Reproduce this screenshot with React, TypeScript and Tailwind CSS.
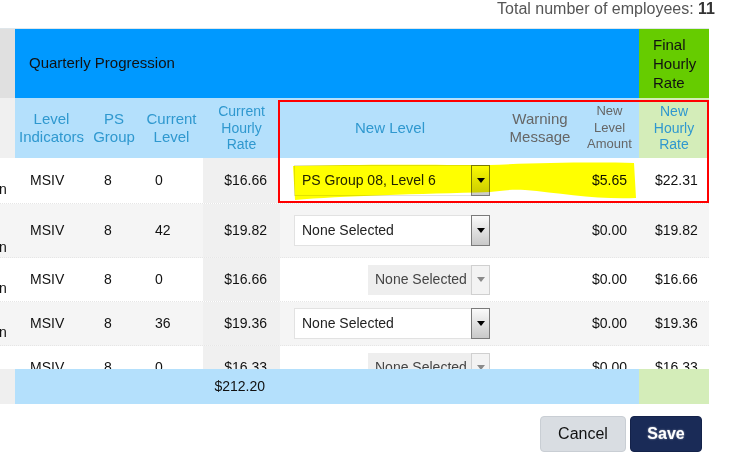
import React from "react";

const cols = "grid grid-cols-[15px_73px_52px_63px_77px_220px_80px_59px_70px]";

interface Row {
  lines: number;
  height: string;
  bg: string;
  level: string;
  rate: string;
  select: "chosen" | "open" | "disabled";
  amount: string;
  final: string;
}

const rows: Row[] = [
  { lines: 2, height: "h-[46px]", bg: "bg-white", level: "0", rate: "$16.66", select: "chosen", amount: "$5.65", final: "$22.31" },
  { lines: 3, height: "h-[54px]", bg: "bg-[#f5f5f5]", level: "42", rate: "$19.82", select: "open", amount: "$0.00", final: "$19.82" },
  { lines: 2, height: "h-[44px]", bg: "bg-white", level: "0", rate: "$16.66", select: "disabled", amount: "$0.00", final: "$16.66" },
  { lines: 2, height: "h-[44px]", bg: "bg-[#f5f5f5]", level: "36", rate: "$19.36", select: "open", amount: "$0.00", final: "$19.36" },
  { lines: 2, height: "h-[44px]", bg: "bg-white", level: "0", rate: "$16.33", select: "disabled", amount: "$0.00", final: "$16.33" },
];

function Arrow({ dim }: { dim?: boolean }) {
  return (
    <svg width="8" height="5" viewBox="0 0 8 5">
      <path d="M0 0 L8 0 L4 5 Z" fill={dim ? "#8a8a8a" : "#000"} />
    </svg>
  );
}

function LevelSelect({ kind }: { kind: Row["select"] }) {
  if (kind === "disabled") {
    return (
      <div className="ml-auto mr-[10px] flex h-[30px] w-[122px] items-stretch bg-[#eeeeee]">
        <span className="flex flex-1 items-center pl-[7px] text-[14px] text-[#444]">None Selected</span>
        <span className="flex w-[19px] items-center justify-center border border-[#d0d0d0] bg-[#f3f3f3]">
          <Arrow dim />
        </span>
      </div>
    );
  }
  return (
    <div className="ml-[14px] flex h-[31px] w-[196px] items-stretch border border-[#e2e2e2] bg-white">
      <span className="flex flex-1 items-center pl-[7px] text-[14px] text-[#222]">
        {kind === "chosen" ? "PS Group 08, Level 6" : "None Selected"}
      </span>
      <span className="-my-px -mr-px flex w-[19px] items-center justify-center border border-[#7a7a7a] bg-gradient-to-b from-[#fafafa] to-[#c9c9c9]">
        <Arrow />
      </span>
    </div>
  );
}

function NameTail({ lines }: { lines: number }) {
  return (
    <div className="overflow-hidden">
      <div className="-ml-[1px] leading-[17px]">
        {Array.from({ length: lines - 1 }).map((_, i) => (
          <div key={i}>&nbsp;</div>
        ))}
        <div>n</div>
      </div>
    </div>
  );
}

export default function App() {
  return (
    <div className="relative h-[456px] w-[745px] overflow-hidden bg-white font-['Liberation_Sans',Arial,sans-serif] text-[14px] text-[#111]">
      <div className="flex h-[28px] justify-end pr-[30px] pt-px text-[16px] leading-[16px] text-[#555]">
        <span>
          Total number of employees: <b className="text-[#333]">11</b>
        </span>
      </div>

      <div className="w-[709px] border-t border-[#dfe6ea]">
        <div className="flex h-[69px]">
          <div className="w-[15px] bg-[#e0e0e0]" />
          <div className="flex flex-1 items-center bg-[#0099ff] pl-[14px] text-[15px]">Quarterly Progression</div>
          <div className="flex w-[70px] items-center bg-[#66cc00] pl-[14px] text-[15px] leading-[19px]">
            Final
            <br />
            Hourly
            <br />
            Rate
          </div>
        </div>

        <div className={`${cols} h-[60px] items-center text-center text-[15px] leading-[18px] text-[#2f98cf]`}>
          <div className="h-full bg-[#f0f0f0]" />
          <div className="flex h-full items-center justify-center bg-[#b4e0fc]">Level Indicators</div>
          <div className="flex h-full items-center justify-center bg-[#b4e0fc]">PS Group</div>
          <div className="flex h-full items-center justify-center bg-[#b4e0fc]">Current Level</div>
          <div className="flex h-full items-center justify-center bg-[#b4e0fc] text-[14px] leading-[16.5px]">
            Current
            <br />
            Hourly
            <br />
            Rate
          </div>
          <div className="flex h-full items-center justify-center bg-[#b4e0fc]">New Level</div>
          <div className="flex h-full items-center justify-center bg-[#b4e0fc] text-[#666]">Warning Message</div>
          <div className="flex h-full items-center justify-center bg-[#b4e0fc] text-[13px] leading-[16.5px] text-[#666]">
            New
            <br />
            Level
            <br />
            Amount
          </div>
          <div className="flex h-full items-center justify-center bg-[#d4edb9] text-[14px] leading-[16.5px]">
            New
            <br />
            Hourly
            <br />
            Rate
          </div>
        </div>

        <div className="relative h-[211px] overflow-hidden">
          {rows.map((r, i) => (
            <div key={i} className={`${cols} ${r.height} ${r.bg} relative items-center border-b border-dotted border-[#e6e6e6]`}>
              <NameTail lines={r.lines} />
              <div className="pl-[15px]">MSIV</div>
              <div className="pl-[16px]">8</div>
              <div className="pl-[15px]">{r.level}</div>
              <div className="flex h-full items-center justify-end bg-[#f0f0f0] pr-[13px]">{r.rate}</div>
              <LevelSelect kind={r.select} />
              <div />
              <div className="pr-[12px] text-right">{r.amount}</div>
              <div className="pl-[16px]">{r.final}</div>
              {r.select === "chosen" && (
                <svg className="pointer-events-none absolute left-0 top-0 mix-blend-multiply" width="709" height="46">
                  <path
                    d="M293 8 C360 6 440 7 490 7 C530 5 590 4 634 5 L636 40 C600 42 560 35 525 32 C510 31 500 33 490 34 C420 36 340 38 295 42 Z"
                    fill="#ffff00"
                  />
                </svg>
              )}
            </div>
          ))}
        </div>

        <div className="flex h-[35px]">
          <div className="w-[15px] bg-[#efefef]" />
          <div className="flex w-[624px] items-center bg-[#b4e0fc]">
            <span className="w-[250px] text-right">$212.20</span>
          </div>
          <div className="w-[70px] bg-[#d4edb9]" />
        </div>
      </div>

      <div className="mt-[12px] flex justify-end gap-[4px] pr-[43px]">
        <button className="h-[36px] w-[86px] rounded-[4px] border border-[#c9ced4] bg-[#d9dde2] text-[16px] text-[#111]">
          Cancel
        </button>
        <button className="h-[36px] w-[72px] rounded-[4px] border border-[#14224a] bg-[#1a2b57] text-[16px] font-bold text-white [text-shadow:0_0_2px_rgba(255,255,255,0.6)]">
          Save
        </button>
      </div>

      <div className="pointer-events-none absolute left-[278px] top-[100px] h-[103px] w-[431px] border-2 border-[#ff0000]" />
    </div>
  );
}
